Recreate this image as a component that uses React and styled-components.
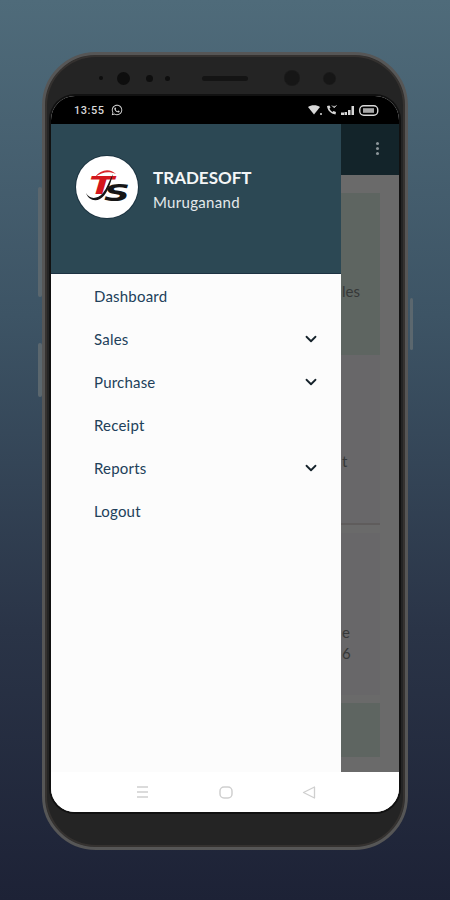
import React from 'react'
import styled, { createGlobalStyle } from 'styled-components'
import { ChevronDown } from 'lucide-react'
import { FaWhatsapp } from 'react-icons/fa'

const GlobalStyle = createGlobalStyle`
  html, body {
    margin: 0;
    height: 900px;
    overflow: hidden;
  }
  body {
    font-family: Lato, "Noto Sans", sans-serif;
  }
`

const Page = styled.div`
  width: 450px;
  height: 900px;
  padding-top: 52px;
  box-sizing: border-box;
  display: flex;
  justify-content: center;
  background: linear-gradient(180deg, #4f6b7a 0%, #3d5465 35%, #2a3447 70%, #1d2236 100%);
`

const Phone = styled.div`
  position: relative;
  width: 366px;
  height: 798px;
  box-sizing: border-box;
  border: 3px solid #565656;
  border-radius: 54px;
  background: #242424;
  box-shadow: inset 0 0 0 2px #353230;
  padding: 0 6px;
  display: flex;
  flex-direction: column;
`

const SideButton = styled.div`
  position: absolute;
  top: ${p => p.$top}px;
  ${p => (p.$right ? 'right: -8px;' : 'left: -7px;')}
  width: ${p => (p.$right ? 3 : 4)}px;
  height: ${p => p.$height}px;
  background: #5b676e;
  border-radius: 2px;
`

const Bezel = styled.div`
  height: 41px;
  flex-shrink: 0;
  display: flex;
  align-items: flex-start;
`

const Sensor = styled.div`
  flex-shrink: 0;
  width: ${p => p.$size}px;
  height: ${p => p.$size}px;
  margin-left: ${p => p.$gap}px;
  margin-top: ${p => 23 - p.$size / 2}px;
  border-radius: 50%;
  background: ${p => p.$color || '#0e0e0e'};
  box-shadow: ${p => (p.$ring ? '0 0 0 1px #1a1a1a' : 'none')};
`

const Speaker = styled.div`
  flex-shrink: 0;
  width: 46px;
  height: 5px;
  margin-left: 32px;
  margin-top: 21px;
  border-radius: 3px;
  background: #141414;
`

const Screen = styled.div`
  width: 348px;
  height: 716px;
  flex-shrink: 0;
  border-radius: 24px;
  overflow: hidden;
  background: #fff;
  box-shadow: 0 0 0 2px #111;
  display: flex;
  flex-direction: column;
`

const StatusBar = styled.div`
  height: 28px;
  flex-shrink: 0;
  background: #000;
  color: #d8d8d8;
  padding: 0 20px 0 23px;
  display: flex;
  align-items: center;
  justify-content: space-between;
`

const StatusGroup = styled.div`
  display: flex;
  align-items: center;
  gap: ${p => p.$gap}px;
`

const Clock = styled.span`
  font-family: Roboto, sans-serif;
  font-size: 11px;
  font-weight: 500;
  letter-spacing: 0.5px;
`

const AppArea = styled.div`
  flex: 1;
  min-height: 0;
  display: flex;
`

const Drawer = styled.div`
  width: 290px;
  flex-shrink: 0;
  display: flex;
  flex-direction: column;
  background: #fcfcfc;
`

const DrawerHeader = styled.div`
  height: 150px;
  flex-shrink: 0;
  box-sizing: border-box;
  padding: 32px 0 0 25px;
  background: #2c4854;
  border-bottom: 1px solid #1d3242;
  display: flex;
  align-items: flex-start;
  gap: 15px;
`

const LogoCircle = styled.div`
  width: 62px;
  height: 62px;
  border-radius: 50%;
  background: #fff;
  box-shadow: 0 0 0 1px #1c3340;
  flex-shrink: 0;
`

const HeaderText = styled.div`
  display: flex;
  flex-direction: column;
  padding-top: 11px;
  gap: 4px;
`

const Company = styled.div`
  font-size: 17px;
  font-weight: 700;
  line-height: 22px;
  color: #f4f6f7;
`

const UserName = styled.div`
  font-size: 15px;
  line-height: 18px;
  letter-spacing: 0.3px;
  color: #e4e9eb;
`

const Menu = styled.div`
  display: flex;
  flex-direction: column;
  padding: 0 21px 0 43px;
`

const MenuRow = styled.div`
  height: 43px;
  display: flex;
  align-items: center;
  justify-content: space-between;
  font-size: 15px;
  letter-spacing: 0.2px;
  color: #21405a;
`

const Behind = styled.div`
  flex: 1;
  min-width: 0;
  display: flex;
  flex-direction: column;
  background: #6a6a6a;
`

const BehindBar = styled.div`
  height: 51px;
  flex-shrink: 0;
  box-sizing: border-box;
  padding: 18px 0 0 35px;
  background: #13242a;
  display: flex;
  flex-direction: column;
  gap: 2px;
`

const BarDot = styled.span`
  width: 3px;
  height: 3px;
  border-radius: 50%;
  background: #8b9599;
`

const CardList = styled.div`
  display: flex;
  flex-direction: column;
  padding-top: 18px;
  width: 39px;
`

const Card = styled.div`
  height: ${p => p.$height}px;
  flex-shrink: 0;
  margin-bottom: ${p => p.$gap || 0}px;
  background: ${p => (p.$green ? '#5e6561' : '#686769')};
  border-bottom: ${p => (p.$line ? '2px solid #5f5c5c' : 'none')};
  box-sizing: border-box;
  display: flex;
  flex-direction: column;
  padding: ${p => p.$pad || 0}px 0 0 1px;
`

const CardText = styled.div`
  font-size: 15px;
  line-height: 21px;
  color: #363838;
`

const NavBar = styled.div`
  height: 40px;
  flex-shrink: 0;
  background: #fff;
  padding: 0 83px 0 85px;
  display: flex;
  align-items: center;
  justify-content: space-between;
`

const TsLogo = () => (
  <svg width="62" height="62" viewBox="0 0 62 62">
    <path d="M19 21 C25 13 34 12 40 18 C33 15 26 16 19 21 Z" fill="#d9252a" />
    <text x="13" y="38" fontFamily="DejaVu Sans, sans-serif" fontSize="24" fontWeight="700" fontStyle="italic" fill="#d3161d" textLength="25" lengthAdjust="spacingAndGlyphs">T</text>
    <path d="M10 37 C13 43 21 44 27 37 C31 32 33 25 37 18 C34 30 30 40 24 43 C18 46 12 43 10 37 Z" fill="#161616" />
    <text x="28" y="45" fontFamily="DejaVu Sans, sans-serif" fontSize="23" fontWeight="700" fontStyle="italic" fill="#161616" textLength="26" lengthAdjust="spacingAndGlyphs">S</text>
  </svg>
)

const StatusIcons = () => (
  <StatusGroup $gap={4}>
    <svg width="14" height="10" viewBox="0 0 14 10">
      <path d="M0 2 C3 -0.5 9 -0.5 12 2 L6 9.5 Z" fill="#d8d8d8" />
      <circle cx="13" cy="9" r="1" fill="#d8d8d8" />
    </svg>
    <svg width="11" height="10" viewBox="0 0 11 10">
      <path d="M1 1 C1.5 5.5 4.5 8.5 9.5 9.5 L10 7 L7.5 6 L6.5 7 C5 6.2 4 5 3.5 3.5 L4.5 2.5 L3.5 0.5 Z" fill="#d8d8d8" />
      <path d="M6 0.5 L8 2.5 L10.5 0.5 M8 2.5 V0.8" stroke="#d8d8d8" strokeWidth="1" fill="none" />
    </svg>
    <svg width="14" height="9" viewBox="0 0 14 9">
      <path d="M0 6.5 H3 V9 H0 Z M3.5 6 H6 V9 H3.5 Z M7 4 H9.5 V9 H7 Z M10.5 0 H13 V9 H10.5 Z" fill="#d8d8d8" />
    </svg>
    <svg width="20" height="11" viewBox="0 0 20 11">
      <rect x="0.75" y="0.75" width="18" height="9.5" rx="4" fill="none" stroke="#d8d8d8" strokeWidth="1.4" />
      <rect x="4" y="3.2" width="11" height="4.6" fill="#a8a8a8" />
    </svg>
  </StatusGroup>
)

const menuItems = [
  { label: 'Dashboard' },
  { label: 'Sales', arrow: true },
  { label: 'Purchase', arrow: true },
  { label: 'Receipt' },
  { label: 'Reports', arrow: true },
  { label: 'Logout' },
]

const App = () => {
  return (
    <Page>
      <GlobalStyle />
      <Phone>
        <SideButton $top={132} $height={110} />
        <SideButton $top={288} $height={54} />
        <SideButton $right $top={243} $height={52} />
        <Bezel>
          <Sensor $size={4} $gap={48} />
          <Sensor $size={13} $gap={14} />
          <Sensor $size={7} $gap={16} />
          <Sensor $size={5} $gap={12} />
          <Speaker />
          <Sensor $size={14} $gap={37} $color="#161616" $ring />
          <Sensor $size={11} $gap={25} $color="#161616" $ring />
        </Bezel>
        <Screen>
          <StatusBar>
            <StatusGroup $gap={7}>
              <Clock>13:55</Clock>
              <FaWhatsapp size={12} />
            </StatusGroup>
            <StatusIcons />
          </StatusBar>
          <AppArea>
            <Drawer>
              <DrawerHeader>
                <LogoCircle>
                  <TsLogo />
                </LogoCircle>
                <HeaderText>
                  <Company>TRADESOFT</Company>
                  <UserName>Muruganand</UserName>
                </HeaderText>
              </DrawerHeader>
              <Menu>
                {menuItems.map(item => (
                  <MenuRow key={item.label}>
                    {item.label}
                    {item.arrow && <ChevronDown size={18} strokeWidth={2.4} color="#16232b" />}
                  </MenuRow>
                ))}
              </Menu>
            </Drawer>
            <Behind>
              <BehindBar>
                <BarDot />
                <BarDot />
                <BarDot />
              </BehindBar>
              <CardList>
                <Card $height={162} $green $pad={88}>
                  <CardText>les</CardText>
                </Card>
                <Card $height={170} $line $gap={8} $pad={96}>
                  <CardText>t</CardText>
                </Card>
                <Card $height={162} $gap={8} $pad={89}>
                  <CardText>e</CardText>
                  <CardText>6</CardText>
                </Card>
                <Card $height={54} $green />
              </CardList>
            </Behind>
          </AppArea>
          <NavBar>
            <svg width="13" height="14" viewBox="0 0 13 14">
              <path d="M1 2 H12 M1 7 H12 M1 12 H12" stroke="#cfcfcf" strokeWidth="1.6" />
            </svg>
            <svg width="14" height="13" viewBox="0 0 14 13">
              <rect x="1" y="1" width="12" height="11" rx="4" fill="none" stroke="#cfcfcf" strokeWidth="1.5" />
            </svg>
            <svg width="14" height="13" viewBox="0 0 14 13">
              <path d="M1.5 6.5 L12.5 1 V12 Z" fill="none" stroke="#cfcfcf" strokeWidth="1.3" strokeLinejoin="round" />
            </svg>
          </NavBar>
        </Screen>
      </Phone>
    </Page>
  )
}

export default App
